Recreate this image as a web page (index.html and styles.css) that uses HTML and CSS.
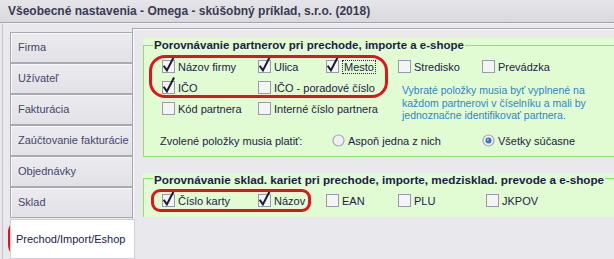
FILE: index.html
```html
<!DOCTYPE html>
<html lang="sk">
<head>
<meta charset="utf-8">
<title>Všeobecné nastavenia</title>
<link rel="stylesheet" href="styles.css">
</head>
<body>
<div class="window">
  <div class="titlebar">Všeobecné nastavenia - Omega - skúšobný príklad, s.r.o. (2018)</div>
  <div class="body">
    <nav class="tabs">
      <div class="tab">Firma</div>
      <div class="tab">Užívateľ</div>
      <div class="tab">Fakturácia</div>
      <div class="tab">Zaúčtovanie fakturácie</div>
      <div class="tab">Objednávky</div>
      <div class="tab">Sklad</div>
      <div class="tab active">Prechod/Import/Eshop</div>
    </nav>
    <main class="panel">
      <section class="group g1">
        <div class="frame">
          <div class="legend">Porovnávanie partnerov pri prechode, importe a e-shope</div>
          <div class="grid grid1">
            <label class="cb c1"><svg viewBox="0 0 13 13" width="13" height="13"><rect x=".5" y=".5" width="12" height="12" class="box"/><path d="M2.2 6.6 L4.9 10.4 L11.6 -2.6" class="tick"/></svg><span>Názov firmy</span></label>
            <label class="cb c2"><svg viewBox="0 0 13 13" width="13" height="13"><rect x=".5" y=".5" width="12" height="12" class="box"/><path d="M2.2 6.6 L4.9 10.4 L11.6 -2.6" class="tick"/></svg><span>Ulica</span></label>
            <label class="cb c3"><svg viewBox="0 0 13 13" width="13" height="13"><rect x=".5" y=".5" width="12" height="12" class="box"/><path d="M2.2 6.6 L4.9 10.4 L11.6 -2.6" class="tick"/></svg><span class="focus">Mesto</span></label>
            <label class="cb c4"><svg viewBox="0 0 13 13" width="13" height="13"><rect x=".5" y=".5" width="12" height="12" class="box"/></svg><span>Stredisko</span></label>
            <label class="cb c5"><svg viewBox="0 0 13 13" width="13" height="13"><rect x=".5" y=".5" width="12" height="12" class="box"/></svg><span>Prevádzka</span></label>

            <label class="cb c1"><svg viewBox="0 0 13 13" width="13" height="13"><rect x=".5" y=".5" width="12" height="12" class="box"/><path d="M2.2 6.6 L4.9 10.4 L11.6 -2.6" class="tick"/></svg><span>IČO</span></label>
            <label class="cb c2 span2"><svg viewBox="0 0 13 13" width="13" height="13"><rect x=".5" y=".5" width="12" height="12" class="box"/></svg><span>IČO - poradové číslo</span></label>
            <p class="info">Vybraté položky musia byť vyplnené na<br>každom partnerovi v číselníku a mali by<br>jednoznačne identifikovať partnera.</p>

            <label class="cb c1"><svg viewBox="0 0 13 13" width="13" height="13"><rect x=".5" y=".5" width="12" height="12" class="box"/></svg><span>Kód partnera</span></label>
            <label class="cb c2 span2"><svg viewBox="0 0 13 13" width="13" height="13"><rect x=".5" y=".5" width="12" height="12" class="box"/></svg><span>Interné číslo partnera</span></label>
          </div>
          <div class="rule-row">
            <span class="rule-label">Zvolené položky musia platiť:</span>
            <label class="rb rb1"><svg viewBox="0 0 13 13" width="13" height="13"><circle cx="6.5" cy="6.5" r="5.5" class="ring"/></svg><span>Aspoň jedna z nich</span></label>
            <label class="rb"><svg viewBox="0 0 13 13" width="13" height="13"><circle cx="6.5" cy="6.5" r="5.5" class="ring"/><circle cx="6.5" cy="6.5" r="3" class="dot"/><circle cx="5.8" cy="5.8" r="1.1" class="shine"/></svg><span>Všetky súčasne</span></label>
          </div>
        </div>
      </section>
      <section class="group g2">
        <div class="frame">
          <div class="legend">Porovnávanie sklad. kariet pri prechode, importe, medzisklad. prevode a e-shope</div>
          <div class="grid grid2">
            <label class="cb"><svg viewBox="0 0 13 13" width="13" height="13"><rect x=".5" y=".5" width="12" height="12" class="box"/><path d="M2.2 6.6 L4.9 10.4 L11.6 -2.6" class="tick"/></svg><span>Číslo karty</span></label>
            <label class="cb"><svg viewBox="0 0 13 13" width="13" height="13"><rect x=".5" y=".5" width="12" height="12" class="box"/><path d="M2.2 6.6 L4.9 10.4 L11.6 -2.6" class="tick"/></svg><span>Názov</span></label>
            <label class="cb"><svg viewBox="0 0 13 13" width="13" height="13"><rect x=".5" y=".5" width="12" height="12" class="box"/></svg><span>EAN</span></label>
            <label class="cb"><svg viewBox="0 0 13 13" width="13" height="13"><rect x=".5" y=".5" width="12" height="12" class="box"/></svg><span>PLU</span></label>
            <label class="cb"><svg viewBox="0 0 13 13" width="13" height="13"><rect x=".5" y=".5" width="12" height="12" class="box"/></svg><span>JKPOV</span></label>
          </div>
        </div>
      </section>
    </main>
  </div>
  <div class="mark mark-partners"></div>
  <div class="mark mark-cards"></div>
  <div class="mark mark-tab"></div>
</div>
</body>
</html>
```
FILE: styles.css
```css
* { box-sizing: border-box; }
html, body { margin: 0; padding: 0; }
body {
  width: 614px;
  height: 259px;
  overflow: hidden;
  background: #e9e9ed;
  font-family: "Liberation Sans", Arial, sans-serif;
  font-size: 11px;
  color: #22224a;
}
.window {
  position: relative;
  width: 614px;
  height: 259px;
  overflow: hidden;
}
.titlebar {
  height: 23px;
  padding: 0 0 0 8px;
  line-height: 22px;
  font-size: 12px;
  font-weight: bold;
  color: #3a3a52;
  background: linear-gradient(#e6e6ea, #d8d8dd);
  border-bottom: 1px solid #a4a4ac;
  white-space: nowrap;
}
.body {
  display: flex;
  margin-left: 2px;
  border-left: 1px solid #c4c4ca;
  border-top: 1px solid #f4f4f6;
  height: 236px;
}
.tabs {
  width: 129px;
  flex: none;
  padding: 8px 0 0 7px;
  display: flex;
  flex-direction: column;
}
.tab {
  height: 31px;
  width: 123px;
  padding-left: 7px;
  line-height: 29px;
  color: #45456a;
  background: linear-gradient(#ececf0, #e2e2e6);
  border: 1px solid #a9a9b2;
  box-shadow: inset 1px 1px 0 #f8f8fa;
  white-space: nowrap;
}
.tab.active {
  position: relative;
  z-index: 1;
  margin-top: 1px;
  width: 125px;
  height: 44px;
  padding: 12px 0 0 5px;
  line-height: 14px;
  color: #22224a;
  background: #ffffff;
  border-color: #d0d0d6;
  box-shadow: none;
}
.panel {
  flex: 1;
  margin-top: 4px;
  border-left: 1px solid #a6a6ae;
  border-top: 1px solid #a6a6ae;
  box-shadow: inset 1px 1px 0 #fafafc;
  padding: 9px 0 0 10px;
}
.group {
  background: #e1fbd3;
}
.g1 { height: 119px; padding-top: 7px; }
.g2 { height: 44px; margin-top: 16px; padding-top: 5px; }
.frame {
  height: 100%;
  border: 1px solid #8fdf72;
  border-right: none;
}
.g2 .frame { border-bottom: none; }
.legend {
  display: block;
  width: fit-content;
  height: 14px;
  line-height: 14px;
  margin: -8px 0 0 9px;
  padding: 0 1px;
  background: #e1fbd3;
  font-weight: bold;
  font-size: 11.5px;
  color: #1c1c48;
  white-space: nowrap;
}
.g2 .legend { margin-top: -6px; font-size: 11.7px; }
.grid {
  display: grid;
  padding-left: 18px;
  align-items: center;
}
.grid1 {
  margin-top: 4px;
  grid-template-columns: 96px 68px 72px 84px 1fr;
  grid-template-rows: repeat(3, 21px);
}
.grid2 {
  margin-top: 3px;
  grid-template-columns: 96px 68px 72px 88px 1fr;
  grid-template-rows: 21px;
}
.cb, .rb {
  display: flex;
  align-items: center;
  gap: 3px;
  white-space: nowrap;
}
.cb svg, .rb svg { flex: none; overflow: visible; }
.span2 { grid-column: span 2; }
.box {
  fill: #f4f4f6;
  stroke: #9a9aaa;
  stroke-width: 1;
}
.tick {
  fill: none;
  stroke: #1a1a34;
  stroke-width: 2;
  stroke-linecap: square;
  stroke-linejoin: miter;
}
.focus {
  border: 1px dotted #2a2a40;
  padding: 0 1px;
  line-height: 12px;
}
.info {
  margin: 0;
  grid-column: 4 / 6;
  grid-row: 2 / 4;
  align-self: start;
  padding: 7px 0 0 4px;
  font-size: 10.5px;
  line-height: 12.5px;
  color: #2a86cf;
  white-space: nowrap;
}
.rule-row {
  display: flex;
  align-items: center;
  height: 21px;
  margin-top: 11px;
  padding-left: 16px;
}
.rule-label { width: 172px; flex: none; }
.rb1 { width: 150px; flex: none; }
.ring {
  fill: #f0f0f2;
  stroke: #a4a8b4;
  stroke-width: 1.2;
}
.dot { fill: #3d6fc4; }
.shine { fill: #9fc0ee; }
.mark {
  position: absolute;
  border: 3px solid #e3131b;
  pointer-events: none;
}
.mark-partners { left: 149px; top: 55px; width: 239px; height: 43px; border-radius: 16px; }
.mark-cards { left: 151px; top: 189px; width: 160px; height: 23px; border-radius: 9px; }
.mark-tab { left: 8px; top: 220px; width: 121px; height: 37px; border-radius: 12px; }
```
